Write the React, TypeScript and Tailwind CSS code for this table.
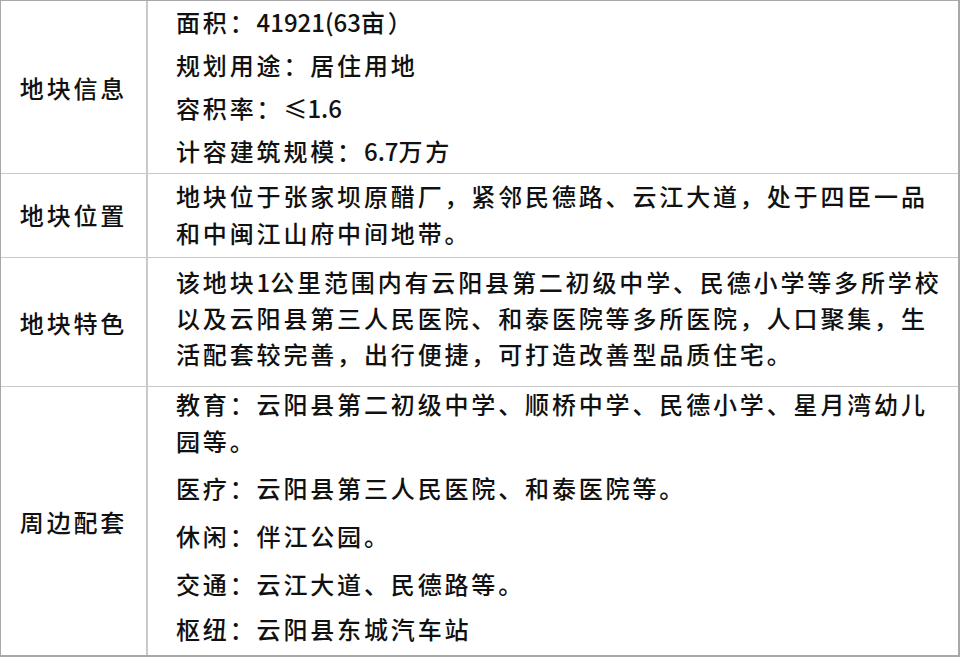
import React from "react";

const cjk = { fontFamily: '"Noto Sans CJK SC", "Noto Sans", sans-serif' };

function Lat({ children }: { children: React.ReactNode }) {
  return <span className="tracking-normal">{children}</span>;
}

function Label({ text, className = "" }: { text: string; className?: string }) {
  return (
    <div className={`w-[147px] shrink-0 border-r-2 border-[#c9c9c9] flex items-center justify-center ${className}`}>
      <span className="leading-[37px]">{text}</span>
    </div>
  );
}

export default function App() {
  return (
    <div className="w-[960px] h-[657px] bg-white text-[#111111] font-medium text-[24px] tracking-[2.85px]" style={cjk}>
      <div className="flex flex-col h-[657px] border-t border-l border-r-2 border-b-2 border-[#a8a8a8]">
        {/* 地块信息 */}
        <div className="flex h-[173px] border-b border-[#c9c9c9]">
          <Label text="地块信息" />
          <div className="flex-1 pl-[28px] pt-[2px] whitespace-nowrap">
            <div className="leading-[37px]">
              面积：<Lat>41921(63</Lat>亩）
            </div>
            <div className="leading-[37px] mt-[6px]">规划用途：居住用地</div>
            <div className="leading-[37px] mt-[6px]">
              容积率：<Lat>≤1.6</Lat>
            </div>
            <div className="leading-[37px] mt-[6px]">
              计容建筑规模：<Lat>6.7</Lat>万方
            </div>
          </div>
        </div>

        {/* 地块位置 */}
        <div className="flex h-[84px] border-b border-[#c9c9c9]">
          <Label text="地块位置" className="pb-[3px]" />
          <div className="flex-1 pl-[28px] pt-[3px] whitespace-nowrap">
            <div className="leading-[37px]">地块位于张家坝原醋厂，紧邻民德路、云江大道，处于四臣一品</div>
            <div className="leading-[37px]">和中闽江山府中间地带。</div>
          </div>
        </div>

        {/* 地块特色 */}
        <div className="flex h-[129px] border-b border-[#c9c9c9]">
          <Label text="地块特色" />
          <div className="flex-1 pl-[28px] pt-[6px] whitespace-nowrap">
            <div className="leading-[36px]">
              该地块<Lat>1</Lat>公里范围内有云阳县第二初级中学、民德小学等多所学校
            </div>
            <div className="leading-[36px]">以及云阳县第三人民医院、和泰医院等多所医院，人口聚集，生</div>
            <div className="leading-[36px]">活配套较完善，出行便捷，可打造改善型品质住宅。</div>
          </div>
        </div>

        {/* 周边配套 */}
        <div className="flex flex-1">
          <Label text="周边配套" />
          <div className="flex-1 pl-[28px] whitespace-nowrap">
            <div className="leading-[37px] -mt-[2px]">教育：云阳县第二初级中学、顺桥中学、民德小学、星月湾幼儿</div>
            <div className="leading-[37px]">园等。</div>
            <div className="leading-[37px] mt-[10px]">医疗：云阳县第三人民医院、和泰医院等。</div>
            <div className="leading-[37px] mt-[11px]">休闲：伴江公园。</div>
            <div className="leading-[37px] mt-[11px]">交通：云江大道、民德路等。</div>
            <div className="leading-[37px] mt-[8px]">枢纽：云阳县东城汽车站</div>
          </div>
        </div>
      </div>
    </div>
  );
}
